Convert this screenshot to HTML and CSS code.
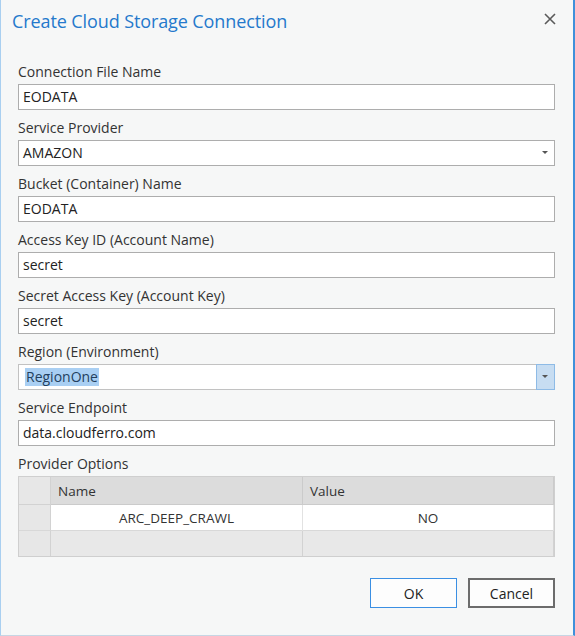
FILE: index.html
```html
<!DOCTYPE html>
<html>
<head>
<meta charset="utf-8">
<link rel="stylesheet" href="styles.css">
</head>
<body>
<div class="dialog">
  <div class="titlebar">
    <div class="title">Create Cloud Storage Connection</div>
    <div class="close">
      <svg width="12" height="12" viewBox="0 0 12 12"><path d="M1 1L11 11M11 1L1 11" stroke="#5a5a5a" stroke-width="1.6" fill="none"/></svg>
    </div>
  </div>

  <div class="label">Connection File Name</div>
  <div class="input">EODATA</div>

  <div class="label">Service Provider</div>
  <div class="input select">AMAZON<span class="arrow"></span></div>

  <div class="label">Bucket (Container) Name</div>
  <div class="input">EODATA</div>

  <div class="label">Access Key ID (Account Name)</div>
  <div class="input">secret</div>

  <div class="label">Secret Access Key (Account Key)</div>
  <div class="input">secret</div>

  <div class="label">Region (Environment)</div>
  <div class="input select active"><span class="sel">RegionOne</span><span class="dropbtn"><span class="arrow"></span></span></div>

  <div class="label">Service Endpoint</div>
  <div class="input">data.cloudferro.com</div>

  <div class="label">Provider Options</div>
  <div class="grid">
    <div class="cell rh hd"></div>
    <div class="cell head">Name</div>
    <div class="cell head">Value</div>
    <div class="cell rh mid"></div>
    <div class="cell data">ARC_DEEP_CRAWL</div>
    <div class="cell data">NO</div>
    <div class="cell rh last"></div>
    <div class="cell empty"></div>
    <div class="cell empty"></div>
  </div>

  <div class="buttons">
    <div class="btn ok">OK</div>
    <div class="btn cancel">Cancel</div>
  </div>
</div>
</body>
</html>
```

FILE: styles.css
```css
* { box-sizing: border-box; }
html, body { margin: 0; padding: 0; background: #f6f7f7; }
body { font-family: "Open Sans", "Noto Sans", sans-serif; color: #2a2a2a; }

.dialog {
  width: 575px;
  height: 636px;
  background: #f6f7f7;
  border-left: 1px solid #a9cff0;
  border-right: 2px solid #3f90da;
  border-bottom: 1px solid #c6d6e4;
  padding: 0 18px 0 17px;
  display: flex;
  flex-direction: column;
}

.titlebar {
  height: 54px;
  display: flex;
  justify-content: space-between;
  align-items: flex-start;
  margin-left: -6px;
}
.title {
  font-size: 18px;
  color: #2479cc;
  padding-top: 8px;
  line-height: 26px;
  letter-spacing: -0.1px;
}
.close {
  padding-top: 13px;
  margin-right: -1px;
}
.close svg { display: block; }

.label {
  height: 30px;
  padding-top: 8px;
  line-height: 20px;
  font-size: 14px;
  color: #333;
}
.titlebar + .label { height: 30px; }

.input {
  height: 26px;
  background: #fff;
  border: 1px solid #adadad;
  font-size: 14px;
  line-height: 24px;
  padding-left: 4px;
  color: #222;
  position: relative;
  display: flex;
  align-items: center;
}
.select .arrow {
  position: absolute;
  right: 6px;
  top: 10px;
  width: 0; height: 0;
  border-left: 3px solid transparent;
  border-right: 3px solid transparent;
  border-top: 3px solid #555;
}
.active { border-color: #c2c2c2; }
.sel {
  background: #a9cff3;
  color: #233f5e;
  line-height: 18px;
  padding: 0 1px;
  margin-left: 2px;
}
.dropbtn {
  position: absolute;
  right: -1px;
  top: -1px;
  width: 19px;
  height: 26px;
  background: #c7ddf2;
  border: 1px solid #8ebbe6;
}
.dropbtn .arrow { right: 6px; top: 10px; }

.grid {
  display: grid;
  grid-template-columns: 32px 252px 251px;
  grid-template-rows: 28px 26px 25px;
  border: 1px solid #cfcfcf;
  width: 537px;
  background: #e7e7e7;
}
.cell {
  font-size: 13.5px;
  color: #333;
  display: flex;
  align-items: center;
}
.rh { background: #e7e7e7; border-right: 1px solid #d2d2d2; }
.rh.hd { border-bottom: 1px solid #d2d2d2; }
.head {
  background: #dcdcdc;
  padding-left: 7px;
  border-right: 1px solid #cbcbcb;
  border-bottom: 1px solid #cbcbcb;
}
.data {
  background: #fff;
  justify-content: center;
  border-right: 1px solid #e2e2e2;
  border-bottom: 1px solid #d8d8d8;
}
.rh.mid { border-bottom: 1px solid #d8d8d8; }
.empty { background: #e8e8e8; border-right: 1px solid #d2d2d2; }

.buttons {
  display: flex;
  justify-content: flex-end;
  gap: 11px;
  margin-top: 21px;
}
.btn {
  width: 87px;
  height: 30px;
  background: #fdfdfd;
  font-size: 14px;
  color: #222;
  display: flex;
  align-items: center;
  justify-content: center;
}
.ok { border: 1px solid #3b8fe3; }
.cancel { border: 2px solid #6c6c6c; }
```
